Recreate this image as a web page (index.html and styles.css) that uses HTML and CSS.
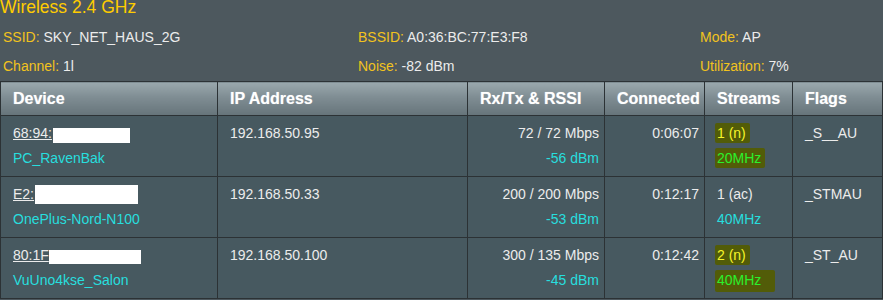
FILE: index.html
```html
<!DOCTYPE html>
<html lang="en">
<head>
    <meta charset="UTF-8">
    <meta name="viewport" content="width=device-width, initial-scale=1.0">
    <title>Wireless Log</title>
    <link rel="stylesheet" href="styles.css">
</head>
<body>
    <div class="band">
        <h2 class="band-title">Wireless 2.4 GHz</h2>
        <div class="band-info">
            <div><span class="label">SSID:</span> SKY_NET_HAUS_2G</div>
            <div><span class="label">BSSID:</span> A0:36:BC:77:E3:F8</div>
            <div><span class="label">Mode:</span> AP</div>
            <div><span class="label">Channel:</span> 1l</div>
            <div><span class="label">Noise:</span> -82 dBm</div>
            <div><span class="label">Utilization:</span> 7%</div>
        </div>

        <table class="clients">
            <colgroup>
                <col class="c-device">
                <col class="c-ip">
                <col class="c-rate">
                <col class="c-time">
                <col class="c-streams">
                <col class="c-flags">
            </colgroup>
            <thead>
                <tr>
                    <th>Device</th>
                    <th>IP Address</th>
                    <th>Rx/Tx &amp; RSSI</th>
                    <th>Connected</th>
                    <th>Streams</th>
                    <th>Flags</th>
                </tr>
            </thead>
            <tbody>
                <tr>
                    <td>
                        <a class="mac" href="#">68:94:<span class="mask mask-1"></span></a>
                        <div class="name">PC_RavenBak</div>
                    </td>
                    <td>192.168.50.95</td>
                    <td class="num">72 / 72 Mbps<div class="rssi">-56 dBm</div></td>
                    <td class="num">0:06:07</td>
                    <td>
                        <span class="hl hl-yellow">1 (n)</span>
                        <div class="bw"><span class="hl hl-green">20MHz</span></div>
                    </td>
                    <td>_S__AU</td>
                </tr>
                <tr>
                    <td>
                        <a class="mac" href="#">E2:<span class="mask mask-2"></span></a>
                        <div class="name">OnePlus-Nord-N100</div>
                    </td>
                    <td>192.168.50.33</td>
                    <td class="num">200 / 200 Mbps<div class="rssi">-53 dBm</div></td>
                    <td class="num">0:12:17</td>
                    <td>
                        1 (ac)
                        <div class="bw"><span class="cyan">40MHz</span></div>
                    </td>
                    <td>_STMAU</td>
                </tr>
                <tr>
                    <td>
                        <a class="mac" href="#">80:1F<span class="mask mask-3"></span></a>
                        <div class="name">VuUno4kse_Salon</div>
                    </td>
                    <td>192.168.50.100</td>
                    <td class="num">300 / 135 Mbps<div class="rssi">-45 dBm</div></td>
                    <td class="num">0:12:42</td>
                    <td>
                        <span class="hl hl-yellow">2 (n)</span>
                        <div class="bw"><span class="hl hl-green wide">40MHz</span></div>
                    </td>
                    <td>_ST_AU</td>
                </tr>
            </tbody>
        </table>
    </div>
</body>
</html>
```

FILE: styles.css
```css
body {
    margin: 0;
    background-color: #4d585e;
    font-family: "Liberation Sans", Arial, sans-serif;
    font-size: 14px;
    color: #ececec;
    overflow: hidden;
}

.band-title {
    margin: 0;
    font-size: 17.5px;
    font-weight: normal;
    line-height: 15px;
    color: #ffcc00;
}

.band-info {
    display: grid;
    grid-template-columns: 355px 342px 1fr;
    margin-top: 8px;
    padding-left: 3px;
    line-height: 29px;
}

.label {
    color: #f2c31d;
}

/* client list */
.clients {
    width: 882px;
    border-collapse: collapse;
    table-layout: fixed;
    background-color: #475960;
    border: 1px solid #2c3235;
}
.c-device { width: 217px; }
.c-ip { width: 250px; }
.c-rate { width: 137px; }
.c-time { width: 100px; }
.c-streams { width: 88px; }
.c-flags { width: 90px; }

.clients th {
    height: 33px;
    padding: 0 0 0 12px;
    text-align: left;
    font-size: 16px;
    font-weight: bold;
    color: #fff;
    white-space: nowrap;
    text-shadow: 0 0 1px rgba(255, 255, 255, 0.5);
    background: linear-gradient(to bottom, #9aa8ad 0%, #7f8d93 45%, #66747a 100%);
    border: 1px solid #2c3235;
}

.clients td {
    height: 50px;
    padding: 5px 4px 5px 12px;
    vertical-align: top;
    line-height: 25px;
    white-space: nowrap;
    border: 1px solid #2c3235;
}
.clients td.num {
    text-align: right;
    padding-right: 5px;
}

.mac {
    color: #ececec;
    text-decoration: underline;
}
.mask {
    display: inline-block;
    vertical-align: top;
    background-color: #fff;
}
.mask-1 { width: 77px; height: 15px; margin-top: 7px; margin-left: 1px; }
.mask-2 { width: 103px; height: 19px; margin-top: 3px; margin-left: 1px; }
.mask-3 { width: 92px; height: 14px; margin-top: 7px; }

.name,
.rssi,
.cyan {
    color: #27dede;
}

.bw {
    line-height: 25px;
}

/* highlighter marks in the streams column */
.hl {
    padding: 2px 4px 2px 2px;
    margin-left: -2px;
    background-color: #525c08;
    border-radius: 2px;
}
.hl-yellow { color: #f6f62a; }
.hl-green { color: #2cf02c; }
.hl-green.wide { padding-right: 14px; padding-bottom: 4px; }
```
